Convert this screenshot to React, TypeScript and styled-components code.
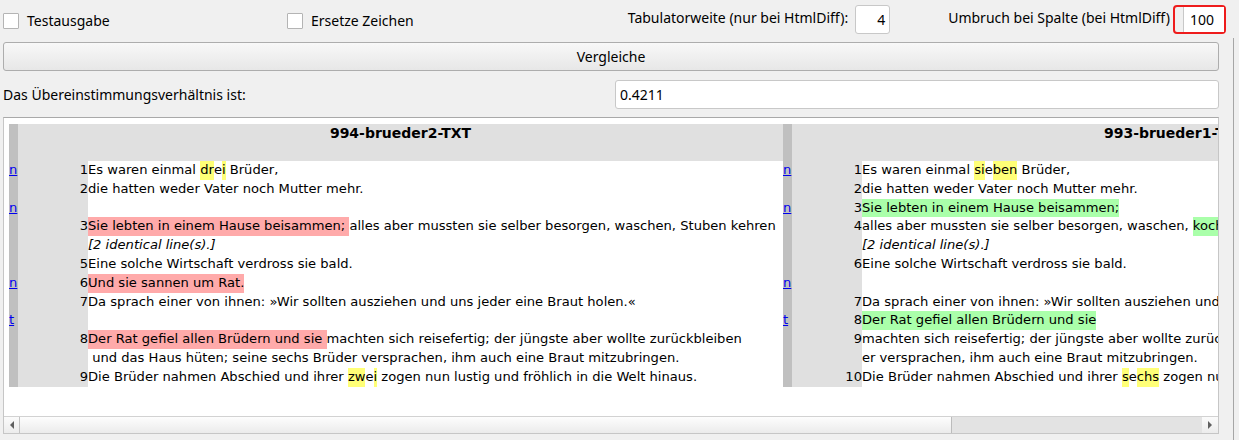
import React from 'react';
import styled, { createGlobalStyle } from 'styled-components';

const Global = createGlobalStyle`
  html, body { margin: 0; padding: 0; background: #f0f0f0; }
  body { font-family: "Noto Sans", "Liberation Sans", sans-serif; color: #000; }
  * { box-sizing: border-box; }
`;

const Window = styled.div`
  width: 1239px;
  height: 440px;
  display: flex;
  overflow: hidden;
  background: #f0f0f0;
`;

const Main = styled.div`
  width: 1233px;
  display: flex;
  flex-direction: column;
  padding: 5px 0 0 3px;
`;

const EdgeLine = styled.div`
  width: 1px;
  background: #a6a6a6;
  margin-top: 38px;
`;

const UiText = styled.span`
  font-size: 14px;
  white-space: nowrap;
`;

const OptionsRow = styled.div`
  display: flex;
  align-items: center;
  height: 29px;
  margin-right: 7px;
`;

const CheckGroup = styled.label<{ $w?: number }>`
  display: flex;
  align-items: center;
  gap: 8px;
  width: ${(p) => (p.$w ? `${p.$w}px` : 'auto')};
  padding-top: 2px;
`;

const CheckBox = styled.span`
  width: 16px;
  height: 16px;
  background: #fff;
  border: 1px solid #b4b4b4;
  border-radius: 1px;
`;

const Spacer = styled.div`
  flex: 1;
`;

const FieldLabel = styled(UiText)<{ $ml?: number }>`
  margin-left: ${(p) => p.$ml ?? 0}px;
  margin-bottom: 5px;
`;

const NumField = styled.div`
  margin-left: 7px;
  width: 35px;
  height: 29px;
  background: #fff;
  border: 1px solid #c8c8c8;
  border-radius: 3px;
  display: flex;
  align-items: center;
  justify-content: flex-end;
  padding-right: 4px;
  font-size: 14px;
`;

const RedFrame = styled.div`
  margin-left: 3px;
  width: 53px;
  height: 29px;
  border: 2px solid #ee1c1c;
  border-radius: 4px;
  display: flex;
  padding-left: 8px;
`;

const FramedInput = styled.div`
  flex: 1;
  background: #fff;
  border-left: 1px solid #c8c8c8;
  display: flex;
  align-items: center;
  justify-content: flex-end;
  padding-right: 10px;
  font-size: 14px;
`;

const CompareButton = styled.button`
  margin: 8px 14px 0 0;
  height: 29px;
  border: 1px solid #adadad;
  border-radius: 3px;
  background: linear-gradient(#f8f8f8, #e7e7e7);
  font-family: inherit;
  font-size: 14px;
  color: #000;
  padding: 0;
`;

const ResultRow = styled.div`
  display: flex;
  align-items: center;
  height: 29px;
  margin: 9px 14px 0 0;
`;

const ResultField = styled.div`
  margin-left: auto;
  width: 604px;
  height: 29px;
  background: #fff;
  border: 1px solid #c8c8c8;
  border-radius: 3px;
  display: flex;
  align-items: center;
  padding-left: 4px;
  font-size: 14px;
`;

const Panel = styled.div`
  margin: 8px 14px 0 0;
  height: 317px;
  border: 1px solid #c6c6c6;
  border-top-color: #a9a9a9;
  display: flex;
  flex-direction: column;
  background: #fff;
`;

const Viewport = styled.div`
  flex: 1;
  overflow: hidden;
  background: #fff;
  padding: 6px 0 0 5px;
`;

const DiffTable = styled.table`
  border-collapse: collapse;
  table-layout: fixed;
  width: 1548px;
  font-family: "DejaVu Sans", sans-serif;
  font-size: 13.1px;
  line-height: 18.8px;
`;

const HeadRow = styled.tr`
  height: 37px;
`;

const BodyRow = styled.tr`
  height: 18.8px;
`;

const NextCell = styled.td`
  background: #c0c0c0;
  padding: 0;
  vertical-align: top;
  white-space: nowrap;
  overflow: visible;
`;

const HeaderCell = styled.th`
  background: #e0e0e0;
  padding: 0;
  vertical-align: top;
  text-align: center;
  font-weight: bold;
  font-size: 14px;
  white-space: nowrap;
`;

const NumCell = styled.td`
  background: #e0e0e0;
  padding: 0;
  text-align: right;
  white-space: nowrap;
`;

const TextCell = styled.td`
  padding: 0;
  white-space: pre;
  overflow: hidden;
`;

const NavLink = styled.a`
  color: #0000ee;
  text-decoration: underline;
`;

const Hl = styled.span<{ $k: 'sub' | 'add' | 'chg' }>`
  display: inline-block;
  background: ${(p) => (p.$k === 'sub' ? '#ffaaaa' : p.$k === 'add' ? '#aaffaa' : '#ffff77')};
`;

const Note = styled.i`
  font-style: italic;
`;

const HScroll = styled.div`
  height: 17px;
  display: flex;
  border-top: 1px solid #d2d2d2;
  background: #f0f0f0;
`;

const ArrowBtn = styled.div<{ $sep?: boolean }>`
  width: 16px;
  display: flex;
  align-items: center;
  justify-content: center;
  border-right: ${(p) => (p.$sep ? '1px solid #c4c4c4' : 'none')};
  background: linear-gradient(#fbfbfb, #ececec);
`;

const ArrowGlyph = styled.span<{ $dir: 'l' | 'r' }>`
  width: 0;
  height: 0;
  border-top: 4px solid transparent;
  border-bottom: 4px solid transparent;
  ${(p) => (p.$dir === 'l' ? 'border-right: 4px solid #606060;' : 'border-left: 4px solid #606060;')}
`;

const Thumb = styled.div`
  width: 932px;
  background: linear-gradient(#fdfdfd, #ebebeb);
  border-right: 1px solid #bcbcbc;
`;

const Track = styled.div`
  flex: 1;
  background: #e3e3e3;
`;

type Seg = [string, ('sub' | 'add' | 'chg')?];
type Row = { nav: string; num: string; text: Seg[] | string; note?: boolean };

const left: Row[] = [
  { nav: 'n', num: '1', text: [['Es waren einmal '], ['dr', 'chg'], ['e'], ['i', 'chg'], [' Brüder,']] },
  { nav: '', num: '2', text: 'die hatten weder Vater noch Mutter mehr.' },
  { nav: 'n', num: '', text: '' },
  { nav: '', num: '3', text: [['Sie lebten in einem Hause beisammen; ', 'sub'], ['alles aber mussten sie selber besorgen, waschen, Stuben kehren']] },
  { nav: '', num: '', text: '[2 identical line(s).]', note: true },
  { nav: '', num: '5', text: 'Eine solche Wirtschaft verdross sie bald.' },
  { nav: 'n', num: '6', text: [['Und sie sannen um Rat.', 'sub']] },
  { nav: '', num: '7', text: 'Da sprach einer von ihnen: »Wir sollten ausziehen und uns jeder eine Braut holen.«' },
  { nav: 't', num: '', text: '' },
  { nav: '', num: '8', text: [['Der Rat gefiel allen Brüdern und sie ', 'sub'], ['machten sich reisefertig; der jüngste aber wollte zurückbleiben']] },
  { nav: '', num: '', text: ' und das Haus hüten; seine sechs Brüder versprachen, ihm auch eine Braut mitzubringen.' },
  { nav: '', num: '9', text: [['Die Brüder nahmen Abschied und ihrer '], ['zw', 'chg'], ['e'], ['i', 'chg'], [' zogen nun lustig und fröhlich in die Welt hinaus.']] },
];

const right: Row[] = [
  { nav: 'n', num: '1', text: [['Es waren einmal '], ['si', 'chg'], ['e'], ['ben', 'chg'], [' Brüder,']] },
  { nav: '', num: '2', text: 'die hatten weder Vater noch Mutter mehr.' },
  { nav: 'n', num: '3', text: [['Sie lebten in einem Hause beisammen;', 'add']] },
  { nav: '', num: '4', text: [['alles aber mussten sie selber besorgen, waschen, '], ['kochen und ', 'add'], ['Stuben kehren']] },
  { nav: '', num: '', text: '[2 identical line(s).]', note: true },
  { nav: '', num: '6', text: 'Eine solche Wirtschaft verdross sie bald.' },
  { nav: 'n', num: '', text: '' },
  { nav: '', num: '7', text: 'Da sprach einer von ihnen: »Wir sollten ausziehen und uns jeder eine Braut holen.«' },
  { nav: 't', num: '8', text: [['Der Rat gefiel allen Brüdern und sie', 'add']] },
  { nav: '', num: '9', text: 'machten sich reisefertig; der jüngste aber wollte zurückbleiben und das Haus hüten; seine Brüd' },
  { nav: '', num: '', text: 'er versprachen, ihm auch eine Braut mitzubringen.' },
  { nav: '', num: '10', text: [['Die Brüder nahmen Abschied und ihrer '], ['s', 'chg'], ['e'], ['chs', 'chg'], [' zogen nun lustig und fröhlich in die Welt hinaus.']] },
];

function renderText(r: Row) {
  if (r.note) return <Note>{r.text as string}</Note>;
  if (typeof r.text === 'string') return r.text;
  return r.text.map(([t, k], i) => (k ? <Hl key={i} $k={k}>{t}</Hl> : <React.Fragment key={i}>{t}</React.Fragment>));
}

function Side({ r }: { r: Row }) {
  return (
    <>
      <NextCell>{r.nav && <NavLink href="#">{r.nav}</NavLink>}</NextCell>
      <NumCell>{r.num}</NumCell>
      <TextCell>{renderText(r)}</TextCell>
    </>
  );
}

export default function App() {
  return (
    <Window>
      <Global />
      <Main>
        <OptionsRow>
          <CheckGroup $w={284}>
            <CheckBox />
            <UiText>Testausgabe</UiText>
          </CheckGroup>
          <CheckGroup>
            <CheckBox />
            <UiText>Ersetze Zeichen</UiText>
          </CheckGroup>
          <Spacer />
          <FieldLabel>Tabulatorweite (nur bei HtmlDiff):</FieldLabel>
          <NumField>4</NumField>
          <FieldLabel $ml={58}>Umbruch bei Spalte (bei HtmlDiff)</FieldLabel>
          <RedFrame>
            <FramedInput>100</FramedInput>
          </RedFrame>
        </OptionsRow>
        <CompareButton>Vergleiche</CompareButton>
        <ResultRow>
          <UiText>Das Übereinstimmungsverhältnis ist:</UiText>
          <ResultField>0.4211</ResultField>
        </ResultRow>
        <Panel>
          <Viewport>
            <DiffTable>
              <colgroup>
                <col style={{ width: 9 }} />
                <col style={{ width: 70 }} />
                <col style={{ width: 695 }} />
                <col style={{ width: 9 }} />
                <col style={{ width: 70 }} />
                <col style={{ width: 695 }} />
              </colgroup>
              <thead>
                <HeadRow>
                  <NextCell as="th" />
                  <HeaderCell colSpan={2}>994-brueder2-TXT</HeaderCell>
                  <NextCell as="th" />
                  <HeaderCell colSpan={2}>993-brueder1-TXT</HeaderCell>
                </HeadRow>
              </thead>
              <tbody>
                {left.map((l, i) => (
                  <BodyRow key={i}>
                    <Side r={l} />
                    <Side r={right[i]} />
                  </BodyRow>
                ))}
              </tbody>
            </DiffTable>
          </Viewport>
          <HScroll>
            <ArrowBtn $sep>
              <ArrowGlyph $dir="l" />
            </ArrowBtn>
            <Thumb />
            <Track />
            <ArrowBtn>
              <ArrowGlyph $dir="r" />
            </ArrowBtn>
          </HScroll>
        </Panel>
      </Main>
      <EdgeLine />
    </Window>
  );
}
